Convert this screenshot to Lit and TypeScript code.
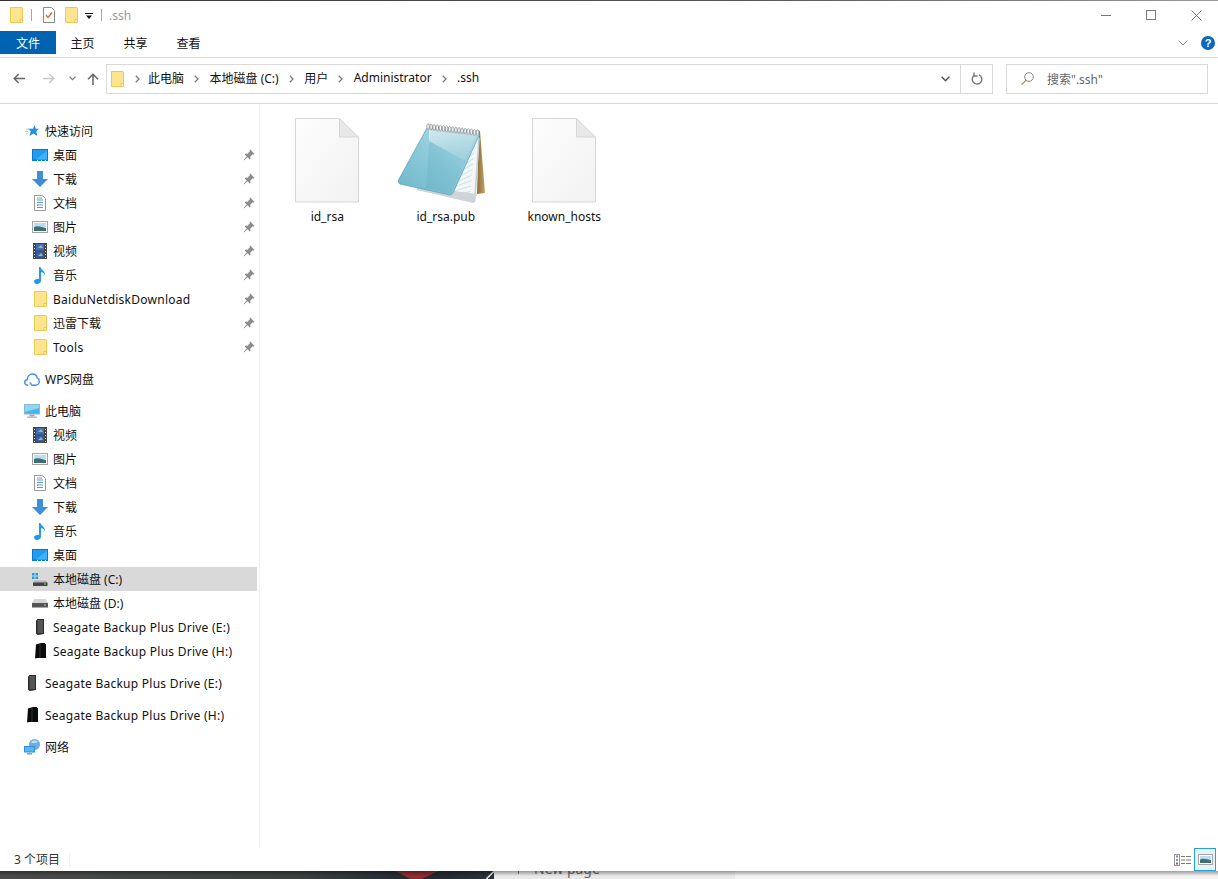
import { LitElement, html, css, svg } from "lit";
import { customElement } from "lit/decorators.js";

const folder = () => html`<svg width="13" height="16" viewBox="0 0 13 16"><path d="M.5.5h11.500l.5.5v14.500H.5z" fill="#fde490" stroke="#eec94f"/><path d="M10 15.500v-3h2.500v3z" fill="#fdf0bd" stroke="#eec94f"/></svg>`;

const icons: Record<string, () => unknown> = {
  star: () => html`<svg width="14" height="12" viewBox="0 0 14 12"><path d="M1 4h3M0 6.500h3M1 9h2" stroke="#a6d4f5"/><path d="M9.500 0l1.200 3.700H14l-2.700 2.600 1 4.700-3.800-2.600L4.500 11l1.300-4.700L3.200 3.700h4.800z" fill="#1f8fe0"/></svg>`,
  desktop: () => html`<svg width="16" height="12" viewBox="0 0 16 12"><rect width="16" height="12" fill="#0a78d0"/><rect x="1" y="1" width="14" height="9.500" fill="#1f9cf0"/><path d="M4 10.500L15 2v8.500z" fill="#3fb2f8"/><path d="M5 11.500h1M9 11.500h1M13 11.500h1" stroke="#cfe9fb"/></svg>`,
  download: () => html`<svg width="16" height="16" viewBox="0 0 16 16"><path d="M5 0h6v8h5l-8 8-8-8h5z" fill="#3d8fdc"/></svg>`,
  doc: () => html`<svg width="12" height="16" viewBox="0 0 12 16"><path d="M.5.5h8l3 3v12H.5z" fill="#fff" stroke="#999"/><path d="M5 3h3M3 5h6M3 7.500h6M3 10h6M3 12.500h6" stroke="#5b9bd5"/><path d="M3 3h1.500M3 10h1" stroke="#777"/></svg>`,
  picture: () => html`<svg width="16" height="12" viewBox="0 0 16 12"><rect x=".5" y=".5" width="15" height="11" fill="#fff" stroke="#a3a3a3"/><rect x="2" y="2" width="12" height="4" fill="#bcdcf0"/><path d="M2 6c4-2 8 0 12 1v3H2z" fill="#3f6f73"/></svg>`,
  video: () => html`<svg width="14" height="16" viewBox="0 0 14 16"><rect width="14" height="16" fill="#444"/><rect x="3" y="1" width="8" height="6.500" fill="#3a6fc0"/><rect x="3" y="8.500" width="8" height="6.500" fill="#2d5fb0"/><path d="M5 5l3-3 2 3zM5 13l3-3 2 3z" fill="#d9a83a"/><path d="M1.500 2v1M1.500 5v1M1.500 8v1M1.500 11v1M1.500 14v1M12.500 2v1M12.500 5v1M12.500 8v1M12.500 11v1M12.500 14v1" stroke="#ddd"/></svg>`,
  music: () => html`<svg width="12" height="17" viewBox="0 0 12 17"><path d="M5 0h1.500c.5 3 5 4 4.500 8-1-2-3-3-4-3v8.500c0 2-2 3.500-4 3.500S0 15.500 0 14.200 2 11.500 5 12z" fill="#1f9bee"/></svg>`,
  folder,
  cloud: () => html`<svg width="16" height="13" viewBox="0 0 16 13"><path d="M4 12.200H3.500C1.800 12.200.7 10.900.7 9.400c0-1.500 1.100-2.600 2.500-2.700C3.500 3.300 5.800 1 8.500 1c2.600 0 4.400 1.800 4.800 4.200 1.200.4 2 1.600 2 3 0 2-1.600 4-3.800 4H8L5.800 9.500" fill="none" stroke="#3e8fe6" stroke-width="1.400"/></svg>`,
  pc: () => html`<svg width="16" height="15" viewBox="0 0 16 15"><rect width="16" height="10.500" fill="#8ab9d0"/><rect x="1" y="1" width="14" height="8.500" fill="#49b4ea"/><path d="M1 1h14v3L1 8z" fill="#8fd5f5"/><rect x="5.500" y="10.500" width="5" height="2" fill="#aaa"/><rect x="3" y="12.500" width="10" height="1.500" fill="#bbb"/></svg>`,
  sysdisk: () => html`<svg width="16" height="13" viewBox="0 0 16 13"><path d="M0 0h2.500v2.500H0zM3.500 0H6v2.500H3.500zM0 3.500h2.500V6H0zM3.500 3.500H6V6H3.500z" fill="#1ba1e2"/><path d="M2 7.500h12l1.500 2v1H1v-1z" fill="#b5b5b5"/><path d="M1 9.500h14.500V13H1z" fill="#444"/><rect x="12" y="10.500" width="2" height="1" fill="#7fd35f"/></svg>`,
  disk: () => html`<svg width="16" height="9" viewBox="0 0 16 9"><path d="M2.500 0h11L16 4H0z" fill="#d4d4d4"/><path d="M0 4h16v4.500H0z" fill="#555"/><rect x="12" y="5.500" width="2" height="1.200" fill="#7fd35f"/></svg>`,
  hdd: () => html`<svg width="8" height="16" viewBox="0 0 8 16"><path d="M1.500 0H8v15l-6.500 1L0 14.500V1.500z" fill="#2b2b2b"/><path d="M1.500 1H7v13H1.500z" fill="#555"/></svg>`,
  hdd2: () => html`<svg width="11" height="16" viewBox="0 0 11 16"><path d="M1 1.500L6 0h3.500L11 1.500V15H2L0 15.500z" fill="#0b0b0b"/><path d="M5 1v14" stroke="#444" stroke-width=".7"/></svg>`,
  net: () => html`<svg width="17" height="16" viewBox="0 0 17 16"><circle cx="10.500" cy="5.500" r="5.500" fill="#6faedc"/><path d="M7 3c2-2 5-2 7 0-2 1-5 2-7 0z" fill="#bde0f5"/><rect x="0" y="7" width="11" height="6.500" fill="#2e8fd8"/><rect x="1" y="8" width="9" height="4.500" fill="#58b6ee"/><rect x="3" y="14" width="5" height="1.500" fill="#999"/></svg>`,
};

const pin = html`<svg class="pin" width="12" height="12" viewBox="0 0 12 12"><path d="M7.200.5l4.300 4.300-1 .7-.8-.3-2.400 2.400.2 1.900-.9.900-2-2.100L1 11.500l-.5-.5L3.800 7.400 1.700 5.400l.9-.9 1.900.2 2.400-2.400-.3-.8z" fill="#8c8c8c"/></svg>`;

type Row = { icon: string; label: string; pinned?: boolean; top?: boolean; gap?: boolean; sel?: boolean; latin?: boolean };

const navRows: Row[] = [
  { icon: "star", label: "快速访问", top: true },
  { icon: "desktop", label: "桌面", pinned: true },
  { icon: "download", label: "下载", pinned: true },
  { icon: "doc", label: "文档", pinned: true },
  { icon: "picture", label: "图片", pinned: true },
  { icon: "video", label: "视频", pinned: true },
  { icon: "music", label: "音乐", pinned: true },
  { icon: "folder", label: "BaiduNetdiskDownload", pinned: true, latin: true },
  { icon: "folder", label: "迅雷下载", pinned: true },
  { icon: "folder", label: "Tools", pinned: true, latin: true },
  { icon: "cloud", label: "WPS网盘", top: true, gap: true },
  { icon: "pc", label: "此电脑", top: true, gap: true },
  { icon: "video", label: "视频" },
  { icon: "picture", label: "图片" },
  { icon: "doc", label: "文档" },
  { icon: "download", label: "下载" },
  { icon: "music", label: "音乐" },
  { icon: "desktop", label: "桌面" },
  { icon: "sysdisk", label: "本地磁盘 (C:)", sel: true },
  { icon: "disk", label: "本地磁盘 (D:)" },
  { icon: "hdd", label: "Seagate Backup Plus Drive (E:)", latin: true },
  { icon: "hdd2", label: "Seagate Backup Plus Drive (H:)", latin: true },
  { icon: "hdd", label: "Seagate Backup Plus Drive (E:)", top: true, gap: true, latin: true },
  { icon: "hdd2", label: "Seagate Backup Plus Drive (H:)", top: true, gap: true, latin: true },
  { icon: "net", label: "网络", top: true, gap: true },
];

const crumbs = ["此电脑", "本地磁盘 (C:)", "用户", "Administrator", ".ssh"];

const chevron = html`<svg class="crumb-chev" width="5" height="8" viewBox="0 0 5 8"><path d="M.8.8L4 4 .8 7.200" fill="none" stroke="#7a7a7a" stroke-width="1.300"/></svg>`;

const blankFile = html`<svg width="64" height="85" viewBox="0 0 64 85"><defs><linearGradient id="bf" x1="0" y1="0" x2="1" y2="1"><stop offset="0" stop-color="#fdfdfd"/><stop offset="1" stop-color="#f2f2f2"/></linearGradient></defs><path d="M.5.5h44l19 19v64.500H.5z" fill="url(#bf)" stroke="#d6d6d6"/><path d="M44.500.5v18.500h19z" fill="#e8e8e8" stroke="#d6d6d6"/></svg>`;

const notepad = html`<svg class="notepad" width="88" height="85" viewBox="0 0 88 85"><defs>
<linearGradient id="cover" x1="0" y1="1" x2="1" y2="0"><stop offset="0" stop-color="#6db6c9"/><stop offset=".5" stop-color="#8ecbdb"/><stop offset="1" stop-color="#c8e8ef"/></linearGradient>
<linearGradient id="shine" x1="0" y1="0" x2="1" y2="1"><stop offset="0" stop-color="#fff" stop-opacity=".6"/><stop offset="1" stop-color="#fff" stop-opacity="0"/></linearGradient>
<linearGradient id="spine" x1="0" y1="0" x2="1" y2="0"><stop offset="0" stop-color="#8a6c36"/><stop offset="1" stop-color="#c2a468"/></linearGradient>
</defs>
<path d="M80 10l3 1 5 62-8 1z" fill="url(#spine)"/>
<path d="M82 15l-2 59-3 9-57-13 6-10z" fill="#f3f7f8"/>
<path d="M82 18L78 76" stroke="#c4cfd3" stroke-width="1.500"/>
${[0, 1, 2, 3, 4, 5, 6, 7, 8, 9].map((i) => svg`<path d=${`M${78 - i * 0.5} ${22 + i * 5.5}L${58 - i * 0.5} ${40 + i * 4}`} stroke="#bcd6e2" stroke-width=".7"/>`)}
<path d="M20 70l56 13 2-1 2-8-60-8z" fill="#cfd4d6"/>
<path d="M1.500 60L30 8q1-2 3-1.500l47 6q3 .5 2 3L56 73q-1 2-3 2L3 64q-2-1-1.500-4z" fill="url(#cover)" stroke="#5fa5b8" stroke-width=".8"/>
<path d="M33 10l-4 58 25 6 27-58z" fill="#4e9fb7" fill-opacity=".2"/>
<path d="M32 8l48 6-12 27-36-20z" fill="url(#shine)"/>
<path d="M30 8l50 6" stroke="#9a9a9a" stroke-width="4" stroke-opacity=".35"/>
${Array.from({ length: 17 }, (_, i) => svg`<ellipse cx=${31 + i * 3.100} cy=${6.500 + i * 0.38} rx="1.300" ry="2.800" fill="#f4f4f4" stroke="#83898c" stroke-width=".7"/>`)}
</svg>`;

const files = [
  { name: "id_rsa", icon: blankFile },
  { name: "id_rsa.pub", icon: notepad },
  { name: "known_hosts", icon: blankFile },
];

@customElement("app-root")
export class AppRoot extends LitElement {
  static styles = css`
    :host {
      display: flex;
      flex-direction: column;
      width: 1218px;
      height: 879px;
      overflow: hidden;
      background: #fff;
      font-family: "Noto Sans", "Noto Sans CJK SC", sans-serif;
      font-size: 12px;
      color: #111;
    }
    svg { display: block; flex: none; }
    .topline { height: 1px; flex: none; background: linear-gradient(90deg, #333, #555 60%, #999); }
    .titlebar { height: 30px; flex: none; box-sizing: border-box; padding: 0 0 2px 10px; display: flex; align-items: center; }
    .sep { width: 1px; height: 12px; background: #a8a8a8; flex: none; }
    .sep.a { margin: 0 11px 0 8px; }
    .sep.b { margin-left: 8px; }
    .qa-folder { margin-left: 10px; }
    .qa-drop { margin: 3px 0 0 7px; }
    .title { color: #999; margin-left: 7px; }
    .qa { display: flex; align-items: center; }
    .winbtns { margin-left: auto; display: flex; align-items: center; padding-right: 16px; gap: 35px; }
    .tabs { height: 23px; flex: none; display: flex; align-items: stretch; }
    .tab { width: 53px; display: flex; align-items: center; justify-content: center; }
    .tab.file { width: 56px; background: #0063b1; color: #fff; }
    .tabs-right { margin-left: auto; display: flex; align-items: center; gap: 13px; padding-right: 3px; }
    .help { width: 14px; height: 14px; border-radius: 50%; background: #0a67c0; color: #fff; font-weight: 700; font-size: 11px; line-height: 14px; text-align: center; font-family: "Liberation Sans", sans-serif; }
    .addr { height: 47px; flex: none; box-sizing: border-box; border-top: 1px solid #d9d9d9; border-bottom: 1px solid #d9d9d9; margin-top: 3px; display: flex; align-items: center; padding: 0 0 4px 13px; }
    .nav-btns { display: flex; align-items: center; width: 93px; flex: none; }
    .nb-fwd { margin-left: 18px; }
    .nb-down { margin-left: 14px; }
    .nb-up { margin-left: 11px; }
    .pathbox { width: 887px; height: 30px; flex: none; box-sizing: border-box; border: 1px solid #d9d9d9; display: flex; align-items: center; padding-left: 4px; }
    .crumb-chev { margin: 0 10.500px 0 10px; }
    .crumb { white-space: nowrap; padding-bottom: 2px; }
    .crumbs { display: flex; align-items: center; }
    .crumbs .crumb-chev:first-child { margin-left: 11px; margin-right: 8px; }
    .dropdown { margin-left: auto; width: 30px; display: flex; justify-content: center; }
    .refresh { width: 31px; height: 28px; border-left: 1px solid #d9d9d9; display: flex; align-items: center; justify-content: center; }
    .searchbox { width: 202px; height: 30px; flex: none; box-sizing: border-box; border: 1px solid #d9d9d9; margin-left: 13px; display: flex; align-items: center; padding-left: 14px; gap: 13px; color: #666; }
    .main { flex: 1; display: flex; min-height: 0; }
    .nav { width: 260px; flex: none; box-sizing: border-box; border-right: 1px solid #f0f0f0; padding-top: 15px; }
    .row { height: 24px; width: 257px; box-sizing: border-box; display: flex; align-items: center; white-space: nowrap; padding-left: 32px; }
    .row.top { padding-left: 24px; }
    .row.gap { margin-top: 8px; }
    .row.sel { background: #d9d9d9; }
    .row .latin { letter-spacing: .25px; }
    .ic { width: 16px; margin-right: 5px; flex: none; display: flex; justify-content: center; align-items: center; }
    .pin { margin-left: auto; margin-right: 2px; }
    .content { flex: 1; display: flex; align-items: flex-start; padding: 14px 0 0 8px; }
    .item { width: 118.500px; display: flex; flex-direction: column; align-items: center; }
    .pic { height: 86px; display: flex; align-items: flex-start; justify-content: center; }
    .notepad { margin: 2px 10px 0 0; }
    .name { margin-top: 4px; line-height: 18px; }
    .status { height: 23px; flex: none; display: flex; align-items: center; padding-left: 14px; color: #333; }
    .status .count { padding-bottom: 2px; }
    .status .div { width: 1px; height: 14px; background: #eee; margin-left: 9px; }
    .views { margin-left: auto; display: flex; align-items: center; padding-right: 2px; gap: 2px; }
    .view-sel { width: 22px; height: 23px; box-sizing: border-box; border: 1px solid #26a0da; background: #e5f3fb; display: flex; align-items: center; justify-content: center; }
    .under { height: 8px; flex: none; display: flex; position: relative; }
    .shade { position: absolute; left: 0; right: 0; top: 0; height: 5px; background: linear-gradient(rgba(0,0,0,.35), rgba(0,0,0,0)); }
    .u-dark { width: 494px; flex: none; background: linear-gradient(90deg, #4a4b4a, #3d4040 60%, #20282d 85%, #2b3338); position: relative; overflow: hidden; }
    .u-dark::after { content: ""; position: absolute; left: 395px; top: 0; width: 44px; height: 8px; background: #8f2a33; clip-path: polygon(0 0, 100% 0, 60% 100%, 35% 100%); }
    .u-dark::before { content: ""; position: absolute; right: 0; top: 0; width: 8px; height: 8px; background: linear-gradient(135deg, transparent 42%, #ddd 48%, #ddd 56%, transparent 62%); }
    .u-light { width: 241px; flex: none; background: #e9e9e9; overflow: hidden; padding-left: 40px; box-sizing: border-box; color: #666; font-size: 14px; line-height: 14px; position: relative; }
    .u-light::before { content: ""; position: absolute; left: 24px; top: 0; width: 1px; height: 3px; background: #777; }
    .u-light span { display: block; margin-top: -9px; }
    .u-rest { flex: 1; background: #f3f3f3; }
  `;

  render() {
    return html`
      <div class="topline"></div>
      <div class="titlebar">
        <div class="qa">
          ${folder()}
          <div class="sep a"></div>
          <svg width="12" height="16" viewBox="0 0 12 16"><path d="M.5.5h8l3 3v12H.5z" fill="#fff" stroke="#888"/><path d="M3 8l2 2.500L9 5.500" fill="none" stroke="#e2622b" stroke-width="1.300"/></svg>
          <span class="qa-folder">${folder()}</span>
          <svg class="qa-drop" width="8" height="7" viewBox="0 0 8 7"><path d="M0 .5h8" stroke="#111"/><path d="M1 2.500h6L4 6z" fill="#111"/></svg>
          <div class="sep b"></div>
        </div>
        <span class="title">.ssh</span>
        <div class="winbtns">
          <svg width="10" height="10" viewBox="0 0 10 10"><path d="M0 5.500h10" stroke="#777"/></svg>
          <svg width="10" height="10" viewBox="0 0 10 10"><rect x=".5" y=".5" width="9" height="9" fill="none" stroke="#777"/></svg>
          <svg width="11" height="11" viewBox="0 0 11 11"><path d="M.5.500l10 10M10.500.5l-10 10" stroke="#777"/></svg>
        </div>
      </div>
      <div class="tabs">
        <div class="tab file">文件</div>
        <div class="tab">主页</div>
        <div class="tab">共享</div>
        <div class="tab">查看</div>
        <div class="tabs-right">
          <svg width="10" height="6" viewBox="0 0 10 6"><path d="M.5.500L5 5 9.500.5" fill="none" stroke="#888"/></svg>
          <div class="help">?</div>
        </div>
      </div>
      <div class="addr">
        <div class="nav-btns">
          <svg width="12" height="11" viewBox="0 0 12 11"><path d="M12 5.500H1.500M5.700 1L1.200 5.500 5.700 10" fill="none" stroke="#666" stroke-width="1.500"/></svg>
          <svg class="nb-fwd" width="12" height="11" viewBox="0 0 12 11"><path d="M0 5.500h10.500M6.300 1l4.500 4.500L6.300 10" fill="none" stroke="#c8c8c8" stroke-width="1.500"/></svg>
          <svg class="nb-down" width="7" height="5" viewBox="0 0 7 5"><path d="M.5.700l3 3 3-3" fill="none" stroke="#777" stroke-width="1.200"/></svg>
          <svg class="nb-up" width="12" height="12" viewBox="0 0 12 12"><path d="M6 12V1.500M1 6.200L6 1.200l5 5" fill="none" stroke="#666" stroke-width="1.500"/></svg>
        </div>
        <div class="pathbox">
          ${folder()}
          <div class="crumbs">
            ${crumbs.map((c) => html`${chevron}<span class="crumb">${c}</span>`)}
          </div>
          <div class="dropdown"><svg width="9" height="6" viewBox="0 0 9 6"><path d="M.6.800l3.900 3.900L8.400.8" fill="none" stroke="#555" stroke-width="1.500"/></svg></div>
          <div class="refresh"><svg width="12" height="13" viewBox="0 0 12 13"><path d="M3.500 3.200a4.800 4.800 0 1 0 4.500-.3" fill="none" stroke="#777" stroke-width="1.400"/><path d="M3 .5v3.500h3.500" fill="none" stroke="#777" stroke-width="1.300"/></svg></div>
        </div>
        <div class="searchbox">
          <svg width="13" height="13" viewBox="0 0 13 13"><circle cx="8" cy="5" r="4.300" fill="none" stroke="#888"/><path d="M5 8.300L.6 12.600" stroke="#b08d57" stroke-width="1.200"/></svg>
          <span>搜索".ssh"</span>
        </div>
      </div>
      <div class="main">
        <div class="nav">
          ${navRows.map(
            (r) => html`<div class="row ${r.top ? "top" : ""} ${r.gap ? "gap" : ""} ${r.sel ? "sel" : ""}">
              <span class="ic">${icons[r.icon]()}</span><span class=${r.latin ? "latin" : ""}>${r.label}</span>${r.pinned ? pin : ""}
            </div>`
          )}
        </div>
        <div class="content">
          ${files.map(
            (f) => html`<div class="item"><div class="pic">${f.icon}</div><div class="name">${f.name}</div></div>`
          )}
        </div>
      </div>
      <div class="status">
        <span class="count">3 个项目</span><div class="div"></div>
        <div class="views">
          <svg width="18" height="12" viewBox="0 0 18 12"><rect x=".5" y=".5" width="5" height="11" fill="#fff" stroke="#999"/><rect x="2" y="1.500" width="2" height="2" fill="#888"/><rect x="2" y="5" width="2" height="2" fill="#5b9bd5"/><rect x="2" y="8.500" width="2" height="2" fill="#c44"/><path d="M7 2.500h4M12 2.500h5M7 6h4M12 6h5M7 9.500h4M12 9.500h5" stroke="#777"/></svg>
          <div class="view-sel"><svg width="15" height="11" viewBox="0 0 15 11"><rect x=".5" y=".5" width="14" height="10" fill="#fff" stroke="#a3a3a3"/><rect x="2" y="2" width="11" height="3.500" fill="#bcdcf0"/><path d="M2 5.500c3-2 8 0 11 .5v3H2z" fill="#3f6f73"/></svg></div>
        </div>
      </div>
      <div class="under">
        <div class="u-dark"></div>
        <div class="u-light"><span>New page</span></div>
        <div class="u-rest"></div>
        <div class="shade"></div>
      </div>
    `;
  }
}
